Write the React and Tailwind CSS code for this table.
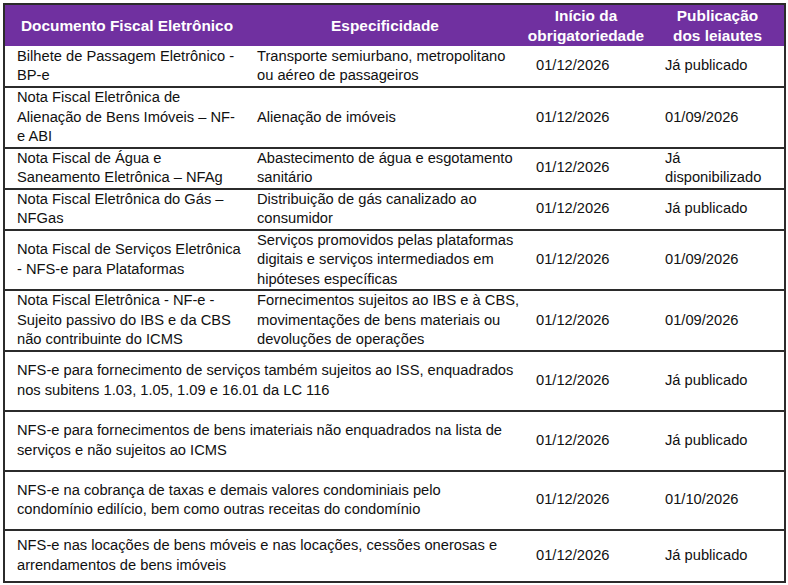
import React from "react";

const rows = [
  {
    h: "h-[41px]",
    doc: ["Bilhete de Passagem Eletrônico -", "BP-e"],
    esp: ["Transporte semiurbano, metropolitano", "ou aéreo de passageiros"],
    inicio: "01/12/2026",
    pub: ["Já publicado"],
  },
  {
    h: "h-[60px]",
    doc: ["Nota Fiscal Eletrônica de", "Alienação de Bens Imóveis – NF-", "e ABI"],
    esp: ["Alienação de imóveis"],
    inicio: "01/12/2026",
    pub: ["01/09/2026"],
  },
  {
    h: "h-[40px]",
    doc: ["Nota Fiscal de Água e", "Saneamento Eletrônica – NFAg"],
    esp: ["Abastecimento de água e esgotamento", "sanitário"],
    inicio: "01/12/2026",
    pub: ["Já", "disponibilizado"],
  },
  {
    h: "h-[40px]",
    doc: ["Nota Fiscal Eletrônica do Gás –", "NFGas"],
    esp: ["Distribuição de gás canalizado ao", "consumidor"],
    inicio: "01/12/2026",
    pub: ["Já publicado"],
  },
  {
    h: "h-[59px]",
    doc: ["Nota Fiscal de Serviços Eletrônica", "- NFS-e para Plataformas"],
    esp: [
      "Serviços promovidos pelas plataformas",
      "digitais e serviços intermediados em",
      "hipóteses específicas",
    ],
    inicio: "01/12/2026",
    pub: ["01/09/2026"],
  },
  {
    h: "h-[59px]",
    doc: ["Nota Fiscal Eletrônica - NF-e -", "Sujeito passivo do IBS e da CBS", "não contribuinte do ICMS"],
    esp: [
      "Fornecimentos sujeitos ao IBS e à CBS,",
      "movimentações de bens materiais ou",
      "devoluções de operações",
    ],
    inicio: "01/12/2026",
    pub: ["01/09/2026"],
  },
];

const wide = [
  {
    h: "h-[60px]",
    text: [
      "NFS-e para fornecimento de serviços também sujeitos ao ISS, enquadrados",
      "nos subitens 1.03, 1.05, 1.09 e 16.01 da LC 116",
    ],
    pub: "Já publicado",
  },
  {
    h: "h-[60px]",
    text: [
      "NFS-e para fornecimentos de bens imateriais não enquadrados na lista de",
      "serviços e não sujeitos ao ICMS",
    ],
    pub: "Já publicado",
  },
  {
    h: "h-[59px]",
    text: [
      "NFS-e na cobrança de taxas e demais valores condominiais pelo",
      "condomínio edilício, bem como outras receitas do condomínio",
    ],
    pub: "01/10/2026",
  },
  {
    h: "h-[52px]",
    text: [
      "NFS-e nas locações de bens móveis e nas locações, cessões onerosas e",
      "arrendamentos de bens imóveis",
    ],
    pub: "Já publicado",
  },
];

const Lines = ({ lines }) =>
  lines.map((l, i) => (
    <span key={i} className="block whitespace-nowrap">
      {l}
    </span>
  ));

export default function App() {
  return (
    <div className="min-h-screen bg-white pt-[3px] pl-[3px] font-['Liberation_Sans',Arial,sans-serif] text-[14.7px] leading-[19.5px] text-[#111]">
      <table className="w-[781px] table-fixed border-collapse border-2 border-[#2b2b2b]">
        <colgroup>
          <col className="w-[245px]" />
          <col className="w-[272px]" />
          <col className="w-[130px]" />
          <col className="w-[134px]" />
        </colgroup>
        <thead>
          <tr className="h-[42px] bg-[#7030a0] text-[15.4px] font-bold text-white">
            <th className="px-1 text-center align-middle">Documento Fiscal Eletrônico</th>
            <th className="px-1 text-center align-middle">Especificidade</th>
            <th className="px-0 text-center align-middle">
              <Lines lines={["Início da", "obrigatoriedade"]} />
            </th>
            <th className="px-0 text-center align-middle">
              <Lines lines={["Publicação", "dos leiautes"]} />
            </th>
          </tr>
        </thead>
        <tbody>
          {rows.map((r, i) => (
            <tr key={i} className={`${r.h} border-t-2 border-[#2b2b2b] first:border-t-0`}>
              <td className="pl-[12px] align-middle">
                <Lines lines={r.doc} />
              </td>
              <td className="pl-[8px] align-middle">
                <Lines lines={r.esp} />
              </td>
              <td className="pl-[15px] align-middle">{r.inicio}</td>
              <td className="pl-[14px] align-middle">
                <Lines lines={r.pub} />
              </td>
            </tr>
          ))}
          {wide.map((r, i) => (
            <tr key={i} className={`${r.h} border-t-2 border-[#2b2b2b]`}>
              <td colSpan={2} className="pl-[12px] align-middle">
                <Lines lines={r.text} />
              </td>
              <td className="pl-[15px] align-middle">01/12/2026</td>
              <td className="pl-[14px] align-middle">{r.pub}</td>
            </tr>
          ))}
        </tbody>
      </table>
    </div>
  );
}
